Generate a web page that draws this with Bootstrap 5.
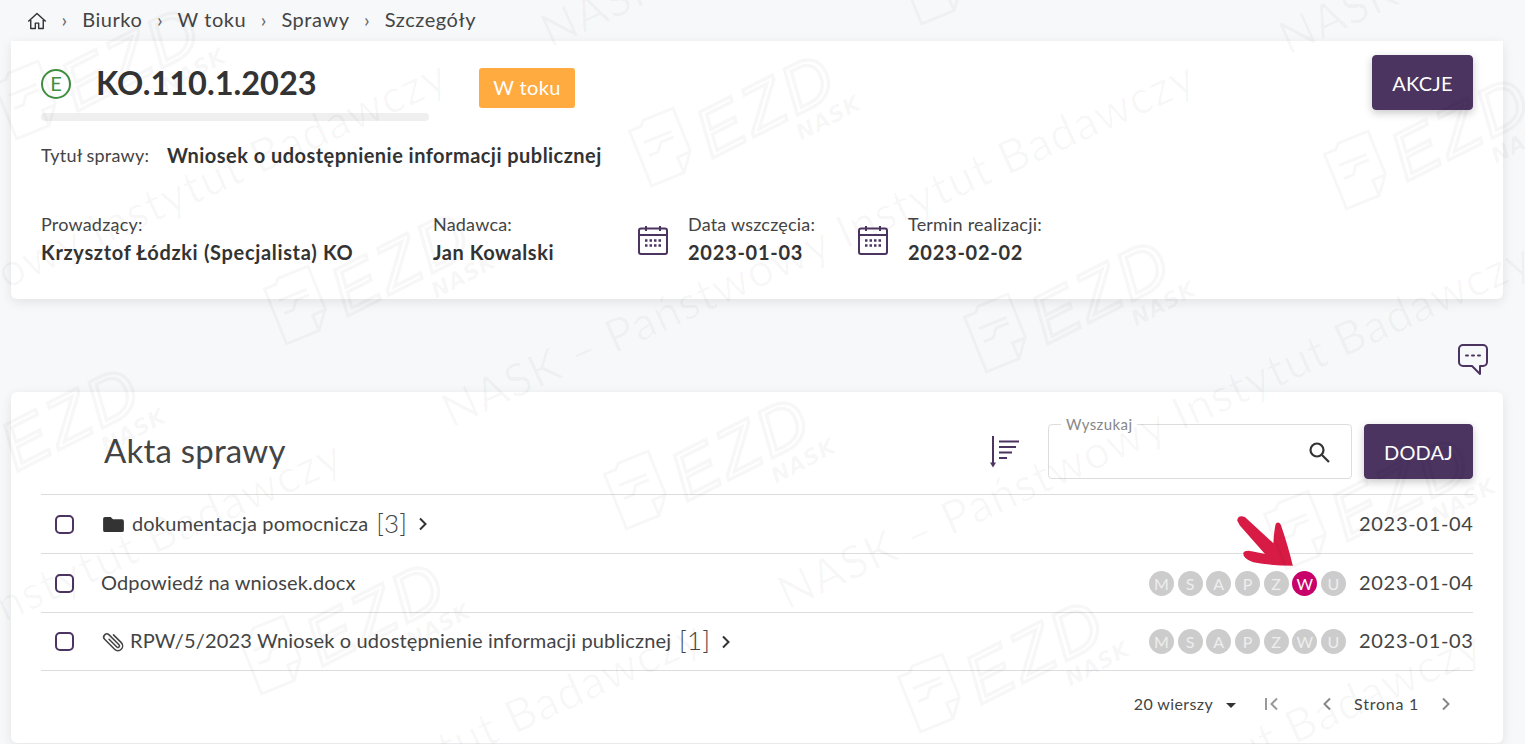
<!DOCTYPE html>
<html lang="pl">
  <head>
    <meta charset="utf-8" />
    <title>Szczegóły sprawy</title>
    <link
      href="https://cdn.jsdelivr.net/npm/bootstrap@5.3.3/dist/css/bootstrap.min.css"
      rel="stylesheet"
    />
    <style>
      body {
        background: #f7f8fa;
        color: #333;
        font-family: "Lato", "Noto Sans", sans-serif;
        font-size: 20px;
        letter-spacing: 0.4px;
        overflow: hidden;
        height: 744px;
      }
      svg { display: block; flex-shrink: 0; }

      /* breadcrumb */
      .crumbs {
        --bs-breadcrumb-divider: "›";
        --bs-breadcrumb-margin-bottom: 0;
        --bs-breadcrumb-item-padding-x: 14.5px;
        --bs-breadcrumb-divider-color: #666;
        height: 41px;
        padding: 0 0 3px 27px;
        align-items: center;
        letter-spacing: 0.55px;
      }
      .crumbs .breadcrumb-item { color: #444; display: flex; align-items: center; line-height: 24px; }
      .crumbs .breadcrumb-item.active { color: #444; }
      .crumbs .breadcrumb-item:first-child svg { margin-top: 3px; }

      .page-wrap { margin: 0 22px 0 11px; }
      .panel { background: #fff; box-shadow: 0 3px 12px rgba(0, 0, 0, 0.09); }
      .panel-case { height: 258px; padding: 14px 30px 0; border-radius: 0 0 6px 6px; }
      .panel-files { height: 351px; padding: 32px 30px 0; border-radius: 6px; position: relative; }

      /* case header */
      .title-col { width: 388px; }
      .title-line { height: 58px; }
      .title-bar { height: 8px; background: #efefef; border-radius: 4px; }
      .kind-mark {
        width: 30px; height: 30px; border: 2px solid #3f8f3f; border-radius: 50%;
        color: #3f8f3f; font-size: 20px; line-height: 25px; text-align: center; letter-spacing: 0;
      }
      .case-no { font-size: 32.5px; font-weight: 700; margin: 0 0 3px 25px; letter-spacing: 0; color: #333; }
      .state-tag {
        margin: 13px 0 0 50px; width: 96px; height: 40px; line-height: 38px; text-align: center;
        background: #ffab40; color: #fff; border-radius: 3px;
      }
      .btn-ezd {
        --bs-btn-bg: #4b3460; --bs-btn-border-color: #4b3460; --bs-btn-color: #fff;
        --bs-btn-hover-bg: #4b3460; --bs-btn-hover-color: #fff;
        font-size: 20px; letter-spacing: 0.2px; border-radius: 4px;
        box-shadow: 0 3px 8px rgba(0, 0, 0, 0.22);
      }
      .btn-akcje { width: 101px; height: 55px; }
      .btn-dodaj { width: 109px; height: 55px; margin-left: 12px; }

      .case-title { margin-top: 22px; line-height: 24px; }
      .field-label { font-size: 18px; letter-spacing: 0.2px; color: #444; line-height: 24px; }
      .case-title .field-label { width: 126px; }
      .field-value { font-weight: 700; line-height: 24px; letter-spacing: 0.55px; }
      .case-title .field-value { letter-spacing: 0.46px; }

      .facts { margin-top: 45px; }
      .fact-owner { width: 392px; }
      .fact-owner .field-value { letter-spacing: 0.67px; }
      .fact-sender { width: 205px; }
      .fact-start { width: 220px; }
      .fact-date { gap: 20px; }
      .fact-date svg { margin-top: 13px; }
      .fact-date .field-value { letter-spacing: 0.75px; }
      .facts .field-value { margin-top: 4px; }

      .comment-row { height: 93px; padding: 45px 15px 0 0; }

      /* files panel */
      .files-title { font-size: 33px; font-weight: 400; color: #444; margin: 0 0 2px 63px; line-height: 53px; letter-spacing: 0.2px; }
      .sort-toggle { margin-right: 28px; }
      .search-box { width: 304px; height: 55px; border: 1px solid #ddd; border-radius: 4px; position: relative; background: #fff; }
      .search-box legend {
        position: absolute; left: 12px; top: -9px; width: auto; float: none; margin: 0;
        padding: 0 5px; font-size: 15px; line-height: 17px; color: #888; background: #fff; letter-spacing: 0.4px;
      }
      .search-box svg { position: absolute; right: 20px; top: 15px; }

      .files-list { margin-top: 15px; }
      .files-list .list-group-item {
        height: 59px; padding: 0 0 0 14px; display: flex; align-items: center; background: transparent;
        color: #444; border: 0; border-top: 1px solid #ddd; font-size: 20px; letter-spacing: 0.15px;
      }
      .files-list .list-group-item:last-child { border-bottom: 1px solid #ddd; }
      .files-list .list-group-item > span { margin-bottom: 3px; }
      .row-check { width: 19px; height: 19px; margin: 0 27px 0 0; border: 2px solid #4b3460; border-radius: 3px; background-color: transparent; }
      .folder-mark { margin: 0 8px 0 2px; }
      .file-date { width: 114px; text-align: right; margin-left: 13px; letter-spacing: 0.7px; white-space: nowrap; }
      .file-count { font-size: 26px; margin: 0 11px 0 8px; font-weight: 300; line-height: 1; }
      .steps { gap: 3.7px; }
      .step {
        width: 25px; height: 25px; border-radius: 50%; background: #ccc; color: #eee;
        font-size: 16px; line-height: 25px; text-align: center; letter-spacing: 0;
      }
      .step-on { background: #c8006a; color: #fff; }
      .hint-arrow { position: absolute; left: 1222px; top: 120px; pointer-events: none; }

      .pager-row { height: 71px; padding-bottom: 6px; font-size: 16px; color: #444; }
      .rows-pick { margin-right: 28px; }
      .rows-pick::after {
        content: ""; display: inline-block; margin-left: 13px; vertical-align: 2px;
        border-left: 5px solid transparent; border-right: 5px solid transparent; border-top: 5px solid #333;
      }
      .pg-prev { margin-left: 42px; }
      .pg-label { margin: 0 22px; letter-spacing: 0.75px; }
      .pg-next { margin-right: 22px; }

      /* watermark lies over the whole page */
      .watermark { position: absolute; left: 0; top: 0; pointer-events: none; z-index: 10; }
      .wm-line { font-family: "Lato", sans-serif; font-size: 46px; fill: rgba(0, 0, 0, 0.028); letter-spacing: 1px; }
      .wm-ezd { font-family: "Liberation Sans", sans-serif; font-size: 68px; font-style: italic; fill: none; stroke: rgba(0, 0, 0, 0.03); stroke-width: 3.5px; letter-spacing: 4px; }
      .wm-rp { font-family: "Liberation Sans", sans-serif; font-size: 26px; font-weight: 700; fill: rgba(0, 0, 0, 0.025); }
      .wm-nask { font-family: "DejaVu Sans", sans-serif; font-size: 22px; font-weight: 700; font-style: italic; fill: rgba(0, 0, 0, 0.04); }
      .wm-icon { fill: none; stroke: rgba(0, 0, 0, 0.03); stroke-width: 3; }
    </style>
  </head>
  <body>
    <nav aria-label="breadcrumb">
      <ol class="breadcrumb crumbs">
        <li class="breadcrumb-item">
          <svg width="20" height="20" viewBox="0 0 24 24" fill="none" stroke="#333" stroke-width="1.7" stroke-linejoin="round">
            <path d="M1.5 12.5 12 3l10.500 9.500M4.500 10v11h5.500v-6.500h4V21h5.500V10" />
          </svg>
        </li>
        <li class="breadcrumb-item">Biurko</li>
        <li class="breadcrumb-item">W toku</li>
        <li class="breadcrumb-item">Sprawy</li>
        <li class="breadcrumb-item active" aria-current="page">Szczegóły</li>
      </ol>
    </nav>

    <div class="page-wrap">
      <!-- Case header -->
      <section class="panel panel-case">
        <div class="d-flex align-items-start">
          <div class="title-col">
            <div class="title-line d-flex align-items-center">
              <div class="kind-mark">E</div>
              <h1 class="case-no">KO.110.1.2023</h1>
            </div>
            <div class="title-bar"></div>
          </div>
          <div class="state-tag">W toku</div>
          <button class="btn btn-ezd btn-akcje ms-auto">AKCJE</button>
        </div>

        <div class="case-title d-flex">
          <div class="field-label">Tytuł sprawy:</div>
          <div class="field-value">Wniosek o udostępnienie informacji publicznej</div>
        </div>

        <div class="facts d-flex">
          <div class="fact-owner">
            <div class="field-label">Prowadzący:</div>
            <div class="field-value">Krzysztof Łódzki (Specjalista) KO</div>
          </div>
          <div class="fact-sender">
            <div class="field-label">Nadawca:</div>
            <div class="field-value">Jan Kowalski</div>
          </div>
          <div class="fact-start fact-date d-flex">
            <svg width="30" height="30" viewBox="0 0 30 30" fill="none" stroke="#4b3460" stroke-width="2">
              <rect x="1" y="3.500" width="28" height="25.500" rx="2" />
              <path d="M1 10h28M8 1v5M22 1v5" />
              <path d="M7 15.500h16M7 20.500h16" stroke-width="2.500" stroke-dasharray="2.500 2" />
            </svg>
            <div>
              <div class="field-label">Data wszczęcia:</div>
              <div class="field-value">2023-01-03</div>
            </div>
          </div>
          <div class="fact-date d-flex">
            <svg width="30" height="30" viewBox="0 0 30 30" fill="none" stroke="#4b3460" stroke-width="2">
              <rect x="1" y="3.500" width="28" height="25.500" rx="2" />
              <path d="M1 10h28M8 1v5M22 1v5" />
              <path d="M7 15.500h16M7 20.500h16" stroke-width="2.500" stroke-dasharray="2.500 2" />
            </svg>
            <div>
              <div class="field-label">Termin realizacji:</div>
              <div class="field-value">2023-02-02</div>
            </div>
          </div>
        </div>
      </section>

      <div class="comment-row d-flex justify-content-end">
        <svg width="30" height="31" viewBox="0 0 30 31" fill="none" stroke="#4b3460" stroke-width="2" stroke-linejoin="round">
          <path d="M5 1h20a4 4 0 0 1 4 4v13a4 4 0 0 1-4 4h-3v8l-8-8H5a4 4 0 0 1-4-4V5a4 4 0 0 1 4-4z" />
          <path d="M8 11.500h2M14 11.500h2M20 11.500h2" stroke-linecap="round" />
        </svg>
      </div>

      <!-- Case files -->
      <section class="panel panel-files">
        <div class="d-flex align-items-center">
          <h2 class="files-title me-auto">Akta sprawy</h2>
          <svg class="sort-toggle" width="30" height="32" viewBox="0 0 30 32" fill="none" stroke="#4b3460" stroke-width="2">
            <path d="M3 0v29" />
            <path d="M0 26.500h6L3 31.500z" fill="#4b3460" stroke="none" />
            <path d="M9 5.500h20M9 11h17M9 16.500h13M9 22h8" />
          </svg>
          <fieldset class="search-box">
            <legend>Wyszukaj</legend>
            <svg width="24" height="24" viewBox="0 0 24 24" fill="none" stroke="#333" stroke-width="2.200">
              <circle cx="10" cy="10" r="6.500" />
              <path d="m15 15 7 7" />
            </svg>
          </fieldset>
          <button class="btn btn-ezd btn-dodaj">DODAJ</button>
        </div>

        <ul class="list-group list-group-flush files-list">
          <li class="list-group-item">
            <input class="form-check-input row-check" type="checkbox" aria-label="Zaznacz" />
            <svg class="folder-mark" width="21" height="17" viewBox="0 0 22 18" fill="#333">
              <path d="M2 1h6l2.500 2.500H20a2 2 0 0 1 2 2V15a2 2 0 0 1-2 2H2a2 2 0 0 1-2-2V3a2 2 0 0 1 2-2z" />
            </svg>
            <span>dokumentacja pomocnicza</span>
            <span class="file-count">[3]</span>
            <svg width="10" height="14" viewBox="0 0 10 14" fill="none" stroke="#333" stroke-width="2"><path d="m2 1.500 5.500 5.500L2 12.500" /></svg>
            <span class="file-date ms-auto">2023-01-04</span>
          </li>
          <li class="list-group-item">
            <input class="form-check-input row-check" type="checkbox" aria-label="Zaznacz" />
            <span>Odpowiedź na wniosek.docx</span>
            <div class="steps d-flex ms-auto">
              <div class="step">M</div><div class="step">S</div><div class="step">A</div><div class="step">P</div><div class="step">Z</div><div class="step step-on">W</div><div class="step">U</div>
            </div>
            <span class="file-date">2023-01-04</span>
          </li>
          <li class="list-group-item">
            <input class="form-check-input row-check" type="checkbox" aria-label="Zaznacz" />
            <svg class="me-1" width="25" height="25" viewBox="0 0 16 16" fill="#444">
              <path transform="rotate(-45 8 8)" d="M4.500 3a2.500 2.500 0 0 1 5 0v9a1.500 1.500 0 0 1-3 0V5a.5.5 0 0 1 1 0v7a.5.5 0 0 0 1 0V3a1.500 1.500 0 1 0-3 0v9a2.500 2.500 0 0 0 5 0V5a.5.5 0 0 1 1 0v7a3.500 3.500 0 1 1-7 0V3z" />
            </svg>
            <span>RPW/5/2023 Wniosek o udostępnienie informacji publicznej</span>
            <span class="file-count">[1]</span>
            <svg width="10" height="14" viewBox="0 0 10 14" fill="none" stroke="#333" stroke-width="2"><path d="m2 1.500 5.500 5.500L2 12.500" /></svg>
            <div class="steps d-flex ms-auto">
              <div class="step">M</div><div class="step">S</div><div class="step">A</div><div class="step">P</div><div class="step">Z</div><div class="step">W</div><div class="step">U</div>
            </div>
            <span class="file-date">2023-01-03</span>
          </li>
        </ul>

        <div class="pager-row d-flex align-items-center justify-content-end">
          <span class="rows-pick">20 wierszy</span>
          <svg width="16" height="14" viewBox="0 0 16 14" fill="none" stroke="#999" stroke-width="2"><path d="M2 1v12M13 1.500 7.500 7l5.500 5.500" /></svg>
          <svg class="pg-prev" width="10" height="14" viewBox="0 0 10 14" fill="none" stroke="#888" stroke-width="2"><path d="M8 1.500 2.500 7 8 12.500" /></svg>
          <span class="pg-label">Strona 1</span>
          <svg class="pg-next" width="10" height="14" viewBox="0 0 10 14" fill="none" stroke="#888" stroke-width="2"><path d="m2 1.500 5.500 5.500L2 12.500" /></svg>
        </div>

        <svg class="hint-arrow" width="64" height="57" viewBox="310 35 190 170" fill="#d81b45">
          <path d="M322 60Q325 42 345 50L430 128Q432 90 437 70Q447 60 453 75Q475 140 488 195Q420 195 370 185Q340 175 340 158Q345 148 365 152Q390 157 405 160L330 75Z" />
        </svg>
      </section>
    </div>

    <!-- Watermark -->
    <svg class="watermark" width="1525" height="744" viewBox="0 0 1525 744">
      <defs>
        <text id="wmLine" class="wm-line" transform="rotate(-24.400)">NASK – Państwowy Instytut Badawczy</text>
        <g id="wmLogo">
          <g class="wm-icon" transform="rotate(-22)">
            <path d="M-27 -28h12l5 -5h32v46l-14 18h-35zM8 31V14h14M-18 -12h30M-18 2h10l6 -8h14" />
          </g>
          <text class="wm-ezd" transform="translate(46 12) rotate(-27)">EZD</text>
          <text class="wm-rp" transform="translate(168 -78) rotate(-25)">RP</text>
          <text class="wm-nask" transform="translate(136 -6) rotate(-28)">NASK</text>
        </g>
      </defs>
      <use href="#wmLine" transform="translate(451 428)" />
      <use href="#wmLine" transform="translate(787 610)" />
      <use href="#wmLine" transform="translate(-297 427)" />
      <use href="#wmLine" transform="translate(-402 807)" />
      <use href="#wmLine" transform="translate(550 48)" />
      <use href="#wmLine" transform="translate(1288 55)" />
      <use href="#wmLine" transform="translate(-42 987)" />
      <use href="#wmLine" transform="translate(738 997)" />
      <use href="#wmLogo" transform="translate(30 100)" />
      <use href="#wmLogo" transform="translate(300 305)" />
      <use href="#wmLogo" transform="translate(665 147)" />
      <use href="#wmLogo" transform="translate(1000 333)" />
      <use href="#wmLogo" transform="translate(1360 170)" />
      <use href="#wmLogo" transform="translate(640 490)" />
      <use href="#wmLogo" transform="translate(275 655)" />
      <use href="#wmLogo" transform="translate(934 693)" />
      <use href="#wmLogo" transform="translate(1300 530)" />
      <use href="#wmLogo" transform="translate(-30 460)" />
      <use href="#wmLogo" transform="translate(935 -15)" />
    </svg>

    <script src="https://cdn.jsdelivr.net/npm/bootstrap@5.3.3/dist/js/bootstrap.bundle.min.js"></script>
  </body>
</html>
